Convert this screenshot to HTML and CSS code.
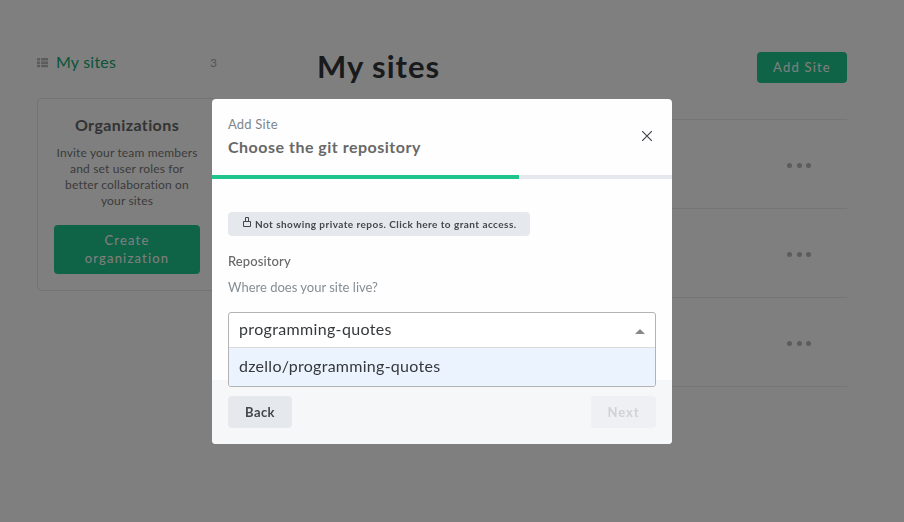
FILE: index.html
```html
<!DOCTYPE html>
<html lang="en">
<head>
<meta charset="utf-8">
<title>My sites</title>
<link rel="stylesheet" href="styles.css">
</head>
<body>
<div class="page">
  <aside class="sidebar">
    <div class="nav-item">
      <svg class="list-icon" width="11" height="10" viewBox="0 0 11 10" fill="currentColor"><path d="M0 0h3v2.5H0zM4 0h7v2.5H4zM0 3.4h3v2.5H0zM4 3.4h7v2.5H4zM0 6.8h3v2.5H0zM4 6.8h7v2.5H4z"/></svg>
      <span class="nav-label">My sites</span>
      <span class="nav-count">3</span>
    </div>
    <section class="org-card">
      <h2 class="org-title">Organizations</h2>
      <p class="org-text">Invite your team members<br>and set user roles for<br>better collaboration on<br>your sites</p>
      <button class="btn-green org-button">Create<br>organization</button>
    </section>
  </aside>
  <main class="main">
    <header class="main-head">
      <h1 class="title">My sites</h1>
      <button class="btn-green add-button">Add Site</button>
    </header>
    <div class="rows">
      <div class="row"><i class="dot"></i><i class="dot"></i><i class="dot"></i></div>
      <div class="row"><i class="dot"></i><i class="dot"></i><i class="dot"></i></div>
      <div class="row"><i class="dot"></i><i class="dot"></i><i class="dot"></i></div>
    </div>
  </main>
</div>
<div class="overlay">
  <div class="modal">
    <header class="modal-head">
      <div>
        <div class="eyebrow">Add Site</div>
        <div class="modal-title">Choose the git repository</div>
      </div>
      <svg class="close" width="10" height="10" viewBox="0 0 10 10" fill="none" stroke="currentColor" stroke-width="1.2"><path d="M0 0l10 10M10 0L0 10"/></svg>
    </header>
    <div class="progress"><div class="progress-fill"></div></div>
    <div class="modal-body">
      <button class="notice">
        <svg class="lock" width="8" height="11" viewBox="0 0 8 11" fill="none" stroke="currentColor"><path d="M.5 4.5h7v5h-7zM2.5 4.5v-4h3v4"/></svg>
        <span class="notice-text">Not showing private repos. Click here to grant access.</span>
      </button>
      <div class="field-label">Repository</div>
      <div class="field-help">Where does your site live?</div>
      <div class="select">
        <div class="select-value"><span class="value-text">programming-quotes</span><i class="caret"></i></div>
        <div class="select-option"><span class="option-text">dzello/programming-quotes</span></div>
      </div>
    </div>
    <footer class="modal-foot">
      <button class="btn-back">Back</button>
      <button class="btn-next" disabled>Next</button>
    </footer>
  </div>
</div>
</body>
</html>
```
FILE: styles.css
```css
* { box-sizing: border-box; }
html, body { height: 100%; }
body {
  margin: 0;
  overflow: hidden;
  background: #fff;
  font-family: Lato, "Liberation Sans", sans-serif;
}
button { border: 0; font-family: inherit; white-space: nowrap; }
h1, h2, p { margin: 0; }

.page {
  display: flex;
  justify-content: space-between;
  padding: 52px 57px 0 37px;
}
.sidebar { width: 180px; }
.nav-item { display: flex; align-items: center; height: 21px; }
.list-icon { color: #b8b8b8; }
.nav-label { margin-left: 8px; padding-bottom: 2px; color: #14a870; font-size: 16px; letter-spacing: 0.2px; }
.nav-count { margin-left: auto; color: #a8a8a8; font-size: 12px; }
.org-card {
  height: 193px;
  margin-top: 25px;
  padding: 15px 16px;
  border: 1px solid #e6e6e6;
  border-radius: 4px;
  text-align: center;
}
.org-title { color: #666; font-size: 16px; line-height: 22px; font-weight: 700; letter-spacing: 0.4px; }
.org-text { margin: 9px -5px 0; color: #777; font-size: 12px; line-height: 16px; letter-spacing: 0.16px; }
.btn-green { background: #1fc78f; color: #fff; border-radius: 4px; }
.org-button {
  width: 146px;
  height: 49px;
  margin-top: 16px;
  padding: 0 0 2px;
  font-size: 13px;
  line-height: 18px;
  letter-spacing: 1.2px;
}
.main { width: 530px; }
.main-head { display: flex; justify-content: space-between; height: 67px; }
.title { color: #313539; font-size: 31px; line-height: 28px; font-weight: 700; letter-spacing: 1px; }
.add-button { width: 90px; height: 31px; padding: 0 0 2px; font-size: 13px; letter-spacing: 1.2px; }
.row {
  display: flex;
  justify-content: flex-end;
  align-items: center;
  gap: 4px;
  height: 89px;
  padding: 3px 36px 0 0;
  border-top: 1px solid #ebebeb;
}
.row:last-child { height: 90px; border-bottom: 1px solid #ebebeb; }
.dot { width: 5px; height: 5px; border-radius: 50%; background: #b8b8b8; }
.dot + .dot { margin-left: 0.5px; }

.overlay {
  position: fixed;
  inset: 0;
  padding: 99px 0 0 212px;
  background: rgba(0, 0, 0, 0.5);
}
.modal {
  display: flex;
  flex-direction: column;
  width: 460px;
  height: 345px;
  border-radius: 4px;
  background: #fefefe;
}
.modal-head {
  display: flex;
  justify-content: space-between;
  height: 76px;
  padding: 16px 20px 0 16px;
}
.eyebrow { color: #7f868c; font-size: 13px; line-height: 18px; letter-spacing: 0.2px; }
.modal-title { margin-top: 3px; color: #686868; font-size: 16px; line-height: 22px; font-weight: 700; letter-spacing: 0.5px; }
.close { margin-top: 16px; color: #40444a; }
.progress { height: 4px; background: #e5e9ee; }
.progress-fill { width: 307px; height: 4px; background: #20c58d; }
.modal-body { height: 201px; padding: 33px 16px 0; }
.notice {
  display: flex;
  align-items: center;
  width: 302px;
  height: 24px;
  padding: 0 0 0 15px;
  border-radius: 4px;
  background: #e5e9ee;
  color: #44484c;
  font-size: 10px;
  font-weight: 700;
}
.lock { margin-bottom: 3px; }
.notice-text { margin-left: 4px; padding-bottom: 1px; letter-spacing: 0.45px; }
.field-label { margin-top: 16px; color: #686868; font-size: 13px; line-height: 18px; font-weight: 500; letter-spacing: 0.1px; }
.field-help { margin-top: 8px; color: #868d93; font-size: 13px; line-height: 18px; }
.select {
  position: relative;
  height: 75px;
  margin-top: 16px;
  border: 1px solid #b3b3b3;
  border-radius: 3px;
  background: #fff;
  color: #36393c;
  font-size: 16px;
  overflow: hidden;
}
.select-value {
  display: flex;
  align-items: center;
  justify-content: space-between;
  height: 35px;
  padding: 0 10px;
  border-bottom: 1px solid #dadada;
}
.value-text { padding-bottom: 4px; letter-spacing: 0.34px; }
.option-text { padding-bottom: 3px; letter-spacing: 0.27px; }
.caret { border: solid transparent; border-width: 0 5px 5px; border-bottom-color: #888; margin-top: 2px; }
.select-option { display: flex; align-items: center; height: 38px; padding: 0 10px; background: #ebf3ff; }
.modal-foot {
  display: flex;
  justify-content: space-between;
  height: 64px;
  padding: 16px;
  border-radius: 0 0 4px 4px;
  background: #f6f7f9;
}
.btn-back, .btn-next { height: 32px; padding: 0 0 1px; border-radius: 4px; font-size: 13px; font-weight: 700; }
.btn-back { width: 64px; background: #e5e8ed; color: #42464b; letter-spacing: 0.4px; }
.btn-next { width: 65px; background: #eef0f3; color: #ced3d8; letter-spacing: 0.9px; }
```
